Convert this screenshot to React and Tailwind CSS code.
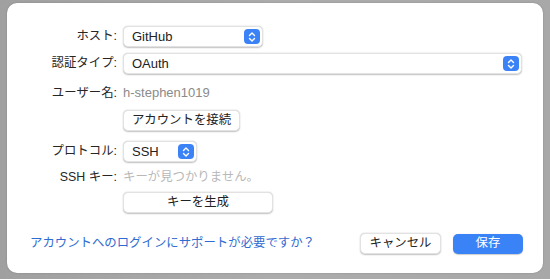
import React from 'react'

const font = {
  fontFamily: '"Liberation Sans", "Noto Sans CJK JP", sans-serif',
}

const Stepper = () => (
  <span className="absolute right-[2px] top-[2px] bottom-[2px] w-[16px] rounded-[4px] bg-[#3b82f7] flex items-center justify-center">
    <svg width="8" height="12" viewBox="0 0 8 12" fill="none">
      <path d="M1.5 4.5 L4 2 L6.5 4.5" stroke="white" strokeWidth="1.4" strokeLinecap="round" strokeLinejoin="round" />
      <path d="M1.5 7.5 L4 10 L6.5 7.5" stroke="white" strokeWidth="1.4" strokeLinecap="round" strokeLinejoin="round" />
    </svg>
  </span>
)

const Popup = ({ value, width }) => (
  <div
    className={`relative h-[21px] ${width} bg-white rounded-[5px] border border-[#e2e2e2] shadow-[0_0.5px_1.5px_rgba(0,0,0,0.25)] flex items-center pl-[8px] text-[13px] text-[#222]`}
  >
    {value}
    <Stepper />
  </div>
)

const Button = ({ children, width }) => (
  <button
    className={`h-[21px] ${width} bg-white rounded-[5px] border border-[#e2e2e2] shadow-[0_0.5px_1.5px_rgba(0,0,0,0.25)] flex items-center justify-center text-[12.4px] text-[#222]`}
  >
    {children}
  </button>
)

const Row = ({ label, children, className = '' }) => (
  <div className={`flex items-center ${className}`}>
    <div className="w-[112px] shrink-0 pr-[2px] text-right text-[12.4px] text-[#262626]">{label}</div>
    <div className="ml-[4px] flex items-center">{children}</div>
  </div>
)

export default function App() {
  return (
    <div className="w-[550px] h-[279px] bg-gradient-to-r from-[#a0a0a0] via-[#acacac] to-[#a8a8a8] pt-[3px] pl-[7px]" style={font}>
      <div className="w-[536px] h-[270px] bg-white rounded-[10px] shadow-[0_0_2px_rgba(0,0,0,0.2)] pt-[23px] flex flex-col">
        <Row label="ホスト:">
          <Popup value="GitHub" width="w-[140px]" />
        </Row>
        <Row label="認証タイプ:" className="mt-[6px]">
          <Popup value="OAuth" width="w-[399px]" />
        </Row>
        <Row label="ユーザー名:" className="mt-[10px] h-[18px]">
          <span className="text-[13px] text-[#8a8a8a]">h-stephen1019</span>
        </Row>
        <Row label="" className="mt-[8px]">
          <Button width="w-[117px]">アカウントを接続</Button>
        </Row>
        <Row label="プロトコル:" className="mt-[10px]">
          <Popup value="SSH" width="w-[74px]" />
        </Row>
        <Row label="SSH キー:" className="mt-[6px] h-[18px]">
          <span className="text-[12.4px] text-[#b8b8b8]">キーが見つかりません。</span>
        </Row>
        <Row label="" className="mt-[6px]">
          <Button width="w-[150px]">キーを生成</Button>
        </Row>
        <div className="mt-[20px] flex items-center pl-[23px] pr-[20px]">
          <a className="text-[12.4px] text-[#2f6bd0]">アカウントへのログインにサポートが必要ですか？</a>
          <div className="ml-auto flex items-center">
            <Button width="w-[81px]">キャンセル</Button>
            <button className="ml-[12px] h-[20px] w-[70px] rounded-[5px] bg-[#3a83f7] text-white text-[12.4px] flex items-center justify-center shadow-[0_0.5px_1px_rgba(0,0,0,0.2)]">
              保存
            </button>
          </div>
        </div>
      </div>
    </div>
  )
}
